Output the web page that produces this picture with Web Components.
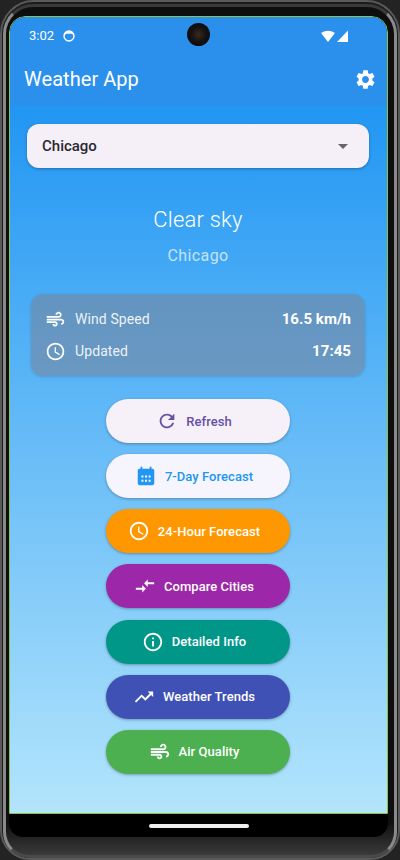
<!DOCTYPE html>
<html>
<head>
<meta charset="utf-8">
<title>Weather App</title>
<style>
  html, body { margin: 0; padding: 0; background: #232323; }
  body { font-family: Roboto, "Liberation Sans", sans-serif; }
</style>
</head>
<body>
<phone-frame>
  <status-bar slot="top"></status-bar>
  <app-bar slot="top" title="Weather App"></app-bar>
  <city-select city="Chicago"></city-select>
  <weather-summary sky="Clear sky" city="Chicago"></weather-summary>
  <info-card>
    <info-row icon="air" label="Wind Speed" value="16.5 km/h"></info-row>
    <info-row icon="clock" label="Updated" value="17:45"></info-row>
  </info-card>
  <action-list>
    <action-button icon="refresh" bg="#f6f1f9" fg="#6750a4">Refresh</action-button>
    <action-button icon="calendar" bg="#f6f5fd" fg="#2196f3">7-Day Forecast</action-button>
    <action-button icon="clock" bg="#ff9800" fg="#fff">24-Hour Forecast</action-button>
    <action-button icon="compare" bg="#9c27a8" fg="#fff">Compare Cities</action-button>
    <action-button icon="info" bg="#009688" fg="#fff">Detailed Info</action-button>
    <action-button icon="trend" bg="#3f51b5" fg="#fff">Weather Trends</action-button>
    <action-button icon="air" bg="#4caf50" fg="#fff">Air Quality</action-button>
  </action-list>
</phone-frame>

<script>
const ICONS = {
  settings: 'M19.14 12.94c.04-.3.06-.61.06-.94 0-.32-.02-.64-.07-.94l2.03-1.58c.18-.14.23-.41.12-.61l-1.92-3.32c-.12-.22-.37-.29-.59-.22l-2.39.96c-.5-.38-1.03-.7-1.62-.94l-.36-2.54c-.04-.24-.24-.41-.48-.41h-3.84c-.24 0-.43.17-.47.41l-.36 2.54c-.59.24-1.13.57-1.62.94l-2.39-.96c-.22-.08-.47 0-.59.22L2.74 8.87c-.12.21-.08.47.12.61l2.03 1.58c-.05.3-.09.63-.09.94s.02.64.07.94l-2.03 1.58c-.18.14-.23.41-.12.61l1.92 3.32c.12.22.37.29.59.22l2.39-.96c.5.38 1.03.7 1.62.94l.36 2.54c.05.24.24.41.48.41h3.84c.24 0 .44-.17.47-.41l.36-2.54c.59-.24 1.13-.56 1.62-.94l2.39.96c.22.08.47 0 .59-.22l1.92-3.32c.12-.22.07-.47-.12-.61l-2.01-1.58zM12 15.6c-1.98 0-3.6-1.62-3.6-3.6s1.62-3.6 3.6-3.6 3.6 1.62 3.6 3.6-1.62 3.6-3.6 3.6z',
  air: 'M14.5 17c0 1.65-1.35 3-3 3s-3-1.35-3-3h2c0 .55.45 1 1 1s1-.45 1-1-.45-1-1-1H2v-2h9.5c1.65 0 3 1.35 3 3zM19 6.5C19 4.57 17.43 3 15.5 3S12 4.57 12 6.5h2c0-.83.67-1.5 1.5-1.5s1.5.67 1.5 1.5S16.33 8 15.5 8H2v2h13.5c1.93 0 3.5-1.57 3.5-3.5zm-.5 4.5H2v2h16.5c.83 0 1.5.67 1.5 1.5s-.67 1.5-1.5 1.5v2c1.93 0 3.5-1.57 3.5-3.5S20.43 11 18.5 11z',
  clock: 'M11.99 2C6.47 2 2 6.48 2 12s4.47 10 9.99 10C17.52 22 22 17.52 22 12S17.52 2 11.99 2zM12 20c-4.42 0-8-3.58-8-8s3.58-8 8-8 8 3.58 8 8-3.58 8-8 8zm.5-13H11v6l5.25 3.15.75-1.23-4.5-2.67z',
  refresh: 'M17.65 6.35C16.2 4.9 14.21 4 12 4c-4.42 0-7.99 3.58-7.99 8s3.57 8 7.99 8c3.73 0 6.84-2.55 7.73-6h-2.08c-.82 2.33-3.04 4-5.65 4-3.31 0-6-2.69-6-6s2.69-6 6-6c1.66 0 3.14.69 4.22 1.78L13 11h7V4l-2.35 2.35z',
  calendar: 'M19 4h-1V2h-2v2H8V2H6v2H5c-1.1 0-2 .9-2 2v14c0 1.1.9 2 2 2h14c1.1 0 2-.9 2-2V6c0-1.1-.9-2-2-2zM7 11.5v2.2h2.2v-2.2H7zm3.9 0v2.2h2.2v-2.2h-2.2zm3.9 0v2.2H17v-2.2h-2.2zM7 16v2.2h2.2V16H7zm3.9 0v2.2h2.2V16h-2.2zm3.9 0v2.2H17V16h-2.2z',
  compare: 'M9.01 14H2v2h7.01v3L13 15l-3.99-4v3zm5.98-1v-3H22V8h-7.01V5L11 9l3.99 4z',
  info: 'M11 7h2v2h-2zm0 4h2v6h-2zm1-9C6.48 2 2 6.48 2 12s4.48 10 10 10 10-4.48 10-10S17.52 2 12 2zm0 18c-4.41 0-8-3.59-8-8s3.59-8 8-8 8 3.59 8 8-3.59 8-8 8z',
  trend: 'M16 6l2.29 2.29-4.88 4.88-4-4L2 16.59 3.41 18l6-6 4 4 6.3-6.29L22 12V6z'
};
const svgIcon = (name, size, fill = 'currentColor') =>
  `<svg width="${size}" height="${size}" viewBox="0 0 24 24" fill="${fill}" style="display:block;flex:none"><path fill-rule="evenodd" d="${ICONS[name]}"/></svg>`;

class PhoneFrame extends HTMLElement {
  constructor() {
    super();
    this.attachShadow({mode: "open"}).innerHTML = `
      <style>
        :host { display: block; width: 400px; height: 860px; overflow: hidden; }
        * { box-sizing: border-box; }
        .body { height: 860px; background: #1b1b1b; border-radius: 34px 34px 30px 30px; border: 2px solid #5a5a5a; padding: 2px 0 0; }
        .bezel { height: 854px; margin: 0 1px; border: 3px solid #8a8a8a; border-top-color: #3a3a3a; border-bottom-color: #4a4a4a; border-radius: 30px 30px 26px 26px; background: linear-gradient(#0e0e0e 96%, #3a3a3a); padding: 9px 7px 0 3px; }
        .glass { width: 379px; height: 821px; background: #000; border-radius: 16px 16px 14px 14px; overflow: hidden; display: flex; flex-direction: column; position: relative; }
        .screen { height: 798px; flex: none; display: flex; flex-direction: column; border: 1px solid #8bc34a; border-radius: 16px 16px 0 0; overflow: hidden; }
        .content { flex: 1; background: linear-gradient(#2196f3, #b3e5fc); display: flex; flex-direction: column; align-items: center; padding: 18px 18px 0 17px; }
        .nav { flex: 1; display: flex; align-items: flex-start; justify-content: center; padding-top: 10px; }
        .handle { width: 100px; height: 3.5px; border-radius: 2px; background: #eee; }
        .cam { position: absolute; left: 178px; top: 7px; width: 23px; height: 23px; border-radius: 50%; background: radial-gradient(circle at 50% 50%, #3a2a20 0, #151212 45%, #050505 100%); }
      </style>
      <div class="body"><div class="bezel"><div class="glass">
        <div class="screen">
          <slot name="top"></slot>
          <div class="content"><slot></slot></div>
        </div>
        <div class="nav"><div class="handle"></div></div>
        <div class="cam"></div>
      </div></div></div>`;
  }
}
customElements.define("phone-frame", PhoneFrame);

class StatusBar extends HTMLElement {
  constructor() {
    super();
    this.attachShadow({mode: "open"}).innerHTML = `
      <style>
        :host { display: flex; align-items: center; box-sizing: border-box; height: 37px; background: #2a90ec; color: #fff; padding: 0 39px 0 19px; font: 400 13px Roboto, sans-serif; }
        .time { margin-right: 9px; }
        .space { flex: 1; }
      </style>
      <span class="time">3:02</span>
      <svg width="12" height="12" viewBox="0 0 12 12"><circle cx="6" cy="6" r="5" fill="none" stroke="#fff" stroke-width="1.4"/><path d="M1.5 5.5V3.4L3 1.6h6l1.5 1.8v2.1L9 3.8H3z" fill="#fff"/></svg>
      <span class="space"></span>
      <svg width="27" height="12" viewBox="0 0 27 12"><path d="M0 3Q7-1.5 14 3L7 12z" fill="#fff"/><path d="M16 12 27 .5V12z" fill="#fff"/></svg>`;
  }
}
customElements.define("status-bar", StatusBar);

class AppBar extends HTMLElement {
  connectedCallback() {
    if (this.shadowRoot) return;
    this.attachShadow({mode: "open"}).innerHTML = `
      <style>
        :host { display: flex; align-items: center; justify-content: space-between; box-sizing: border-box; height: 52px; background: #2a90ec; color: #fff; padding: 0 10.5px 2px 14px; }
        .title { font: 400 20px Roboto, sans-serif; letter-spacing: .05px; }
      </style>
      <span class="title">${this.getAttribute("title")}</span>
      ${svgIcon("settings", 23)}`;
  }
}
customElements.define("app-bar", AppBar);

class CitySelect extends HTMLElement {
  connectedCallback() {
    if (this.shadowRoot) return;
    this.attachShadow({mode: "open"}).innerHTML = `
      <style>
        :host { display: flex; align-items: center; justify-content: space-between; box-sizing: border-box; width: 342px; height: 44px; flex: none; background: #f5f0f8; border-radius: 12px; padding: 0 21px 0 15px; box-shadow: 0 1px 3px rgba(0,0,0,.3); color: #2a282e; font: 500 15px Roboto, sans-serif; }
        .arrow { width: 0; height: 0; border: 5px solid transparent; border-top-color: #666; border-bottom: 0; }
      </style>
      <span>${this.getAttribute("city")}</span>
      <span class="arrow"></span>`;
  }
}
customElements.define("city-select", CitySelect);

class WeatherSummary extends HTMLElement {
  connectedCallback() {
    if (this.shadowRoot) return;
    this.attachShadow({mode: "open"}).innerHTML = `
      <style>
        :host { display: flex; flex-direction: column; align-items: center; flex: none; padding-top: 39px; color: #fff; }
        .sky { font: 300 22px/26px Roboto, sans-serif; letter-spacing: .2px; }
        .city { font: 400 16px/20px Roboto, sans-serif; letter-spacing: .4px; color: rgba(255,255,255,.7); margin-top: 13px; }
      </style>
      <span class="sky">${this.getAttribute("sky")}</span>
      <span class="city">${this.getAttribute("city")}</span>`;
  }
}
customElements.define("weather-summary", WeatherSummary);

class InfoCard extends HTMLElement {
  constructor() {
    super();
    this.attachShadow({mode: "open"}).innerHTML = `
      <style>
        :host { display: flex; flex-direction: column; justify-content: center; gap: 8px; box-sizing: border-box; width: 334px; height: 82px; flex: none; margin-top: 28px; padding: 0 14px; border-radius: 12px; background: rgba(116,135,161,.62); box-shadow: 0 1px 3px rgba(0,0,0,.15); }
      </style>
      <slot></slot>`;
  }
}
customElements.define("info-card", InfoCard);

class InfoRow extends HTMLElement {
  connectedCallback() {
    if (this.shadowRoot) return;
    this.attachShadow({mode: "open"}).innerHTML = `
      <style>
        :host { display: flex; align-items: center; height: 24px; color: #fff; }
        svg { margin-right: 9px; }
        .label { flex: 1; font: 400 14px Roboto, sans-serif; letter-spacing: .1px; color: rgba(255,255,255,.9); }
        .value { font: 700 15px Roboto, sans-serif; letter-spacing: .05px; }
      </style>
      ${svgIcon(this.getAttribute("icon"), 21)}
      <span class="label">${this.getAttribute("label")}</span>
      <span class="value">${this.getAttribute("value")}</span>`;
  }
}
customElements.define("info-row", InfoRow);

class ActionList extends HTMLElement {
  constructor() {
    super();
    this.attachShadow({mode: "open"}).innerHTML = `
      <style>
        :host { display: flex; flex-direction: column; gap: 11.15px; flex: none; margin-top: 23px; }
      </style>
      <slot></slot>`;
  }
}
customElements.define("action-list", ActionList);

class ActionButton extends HTMLElement {
  connectedCallback() {
    if (this.shadowRoot) return;
    const bg = this.getAttribute("bg"), fg = this.getAttribute("fg");
    this.attachShadow({mode: "open"}).innerHTML = `
      <style>
        :host { display: flex; align-items: center; justify-content: center; gap: 8px; box-sizing: border-box; width: 184px; height: 44px; padding-right: 8px; border-radius: 22px; background: ${bg}; color: ${fg}; box-shadow: 0 1px 3px rgba(0,0,0,.3); font: 500 13px Roboto, sans-serif; letter-spacing: .05px; }
      </style>
      ${svgIcon(this.getAttribute("icon"), 22)}
      <slot></slot>`;
  }
}
customElements.define("action-button", ActionButton);
</script>
</body>
</html>
